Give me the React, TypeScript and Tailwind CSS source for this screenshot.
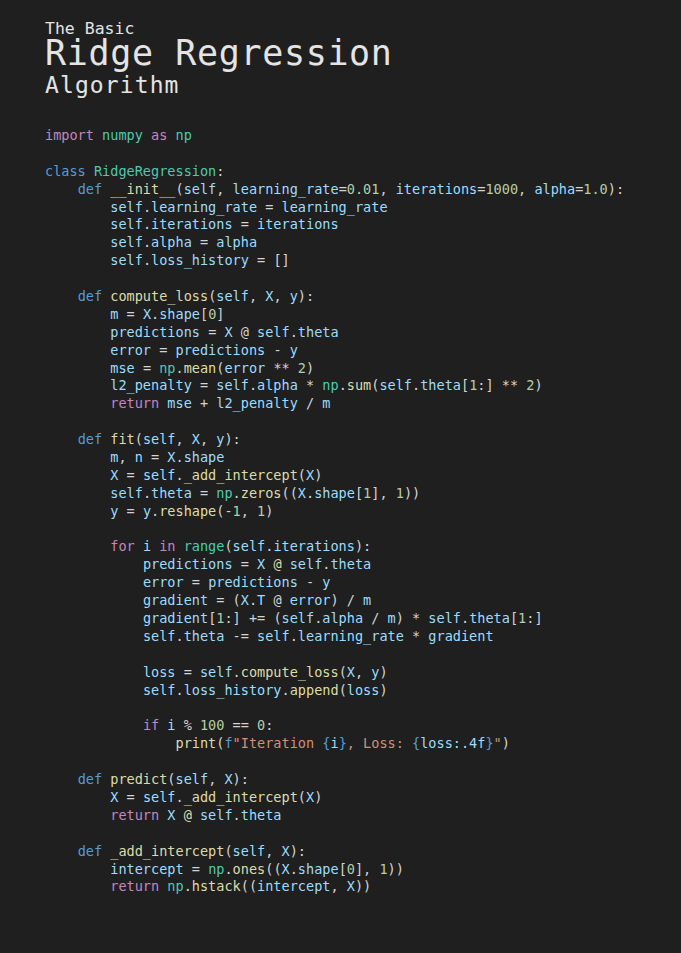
import React from "react";

// source lines; "@@" marks an @ that the editor coloured yellow
const code = [
  "import numpy as np",
  "",
  "class RidgeRegression:",
  "    def __init__(self, learning_rate=0.01, iterations=1000, alpha=1.0):",
  "        self.learning_rate = learning_rate",
  "        self.iterations = iterations",
  "        self.alpha = alpha",
  "        self.loss_history = []",
  "",
  "    def compute_loss(self, X, y):",
  "        m = X.shape[0]",
  "        predictions = X @ self.theta",
  "        error = predictions - y",
  "        mse = np.mean(error ** 2)",
  "        l2_penalty = self.alpha * np.sum(self.theta[1:] ** 2)",
  "        return mse + l2_penalty / m",
  "",
  "    def fit(self, X, y):",
  "        m, n = X.shape",
  "        X = self._add_intercept(X)",
  "        self.theta = np.zeros((X.shape[1], 1))",
  "        y = y.reshape(-1, 1)",
  "",
  "        for i in range(self.iterations):",
  "            predictions = X @@ self.theta",
  "            error = predictions - y",
  "            gradient = (X.T @ error) / m",
  "            gradient[1:] += (self.alpha / m) * self.theta[1:]",
  "            self.theta -= self.learning_rate * gradient",
  "",
  "            loss = self.compute_loss(X, y)",
  "            self.loss_history.append(loss)",
  "",
  "            if i % 100 == 0:",
  "PRINT",
  "",
  "    def predict(self, X):",
  "        X = self._add_intercept(X)",
  "        return X @@ self.theta",
  "",
  "    def _add_intercept(self, X):",
  "        intercept = np.ones((X.shape[0], 1))",
  "        return np.hstack((intercept, X))",
];

const KEYWORDS = new Set(["import", "as", "return", "for", "in", "if"]);
const STORAGE = new Set(["def", "class"]);
const TYPES = new Set(["numpy", "np", "RidgeRegression", "range"]);

function tokenize(line: string) {
  const out: { t: string; c: string }[] = [];
  const re = /(\s+)|(@@)|([A-Za-z_]\w*)|(\d+(?:\.\d+)?)|(.)/g;
  let m: RegExpExecArray | null;
  while ((m = re.exec(line))) {
    const [tok, ws, at, id, num] = m;
    if (ws) out.push({ t: tok, c: "text-[#d4d4d4]" });
    else if (at) out.push({ t: "@", c: "text-[#dcdcaa]" });
    else if (id) {
      const rest = line.slice(re.lastIndex);
      let c = "text-[#9cdcfe]";
      if (KEYWORDS.has(id)) c = "text-[#c586c0]";
      else if (STORAGE.has(id)) c = "text-[#569cd6]";
      else if (TYPES.has(id)) c = "text-[#4ec9b0]";
      else if (rest.startsWith("(")) c = "text-[#dcdcaa]";
      out.push({ t: tok, c });
    } else if (num) out.push({ t: tok, c: "text-[#b5cea8]" });
    else out.push({ t: tok, c: "text-[#d4d4d4]" });
  }
  return out;
}

function PrintLine() {
  return (
    <>
      <span className="text-[#d4d4d4]">{"                "}</span>
      <span className="text-[#dcdcaa]">print</span>
      <span className="text-[#d4d4d4]">(</span>
      <span className="text-[#569cd6]">f</span>
      <span className="text-[#ce9178]">"Iteration </span>
      <span className="text-[#569cd6]">{"{"}</span>
      <span className="text-[#9cdcfe]">i</span>
      <span className="text-[#569cd6]">{"}"}</span>
      <span className="text-[#ce9178]">, Loss: </span>
      <span className="text-[#569cd6]">{"{"}</span>
      <span className="text-[#9cdcfe]">loss:.4f</span>
      <span className="text-[#569cd6]">{"}"}</span>
      <span className="text-[#ce9178]">"</span>
      <span className="text-[#d4d4d4]">)</span>
    </>
  );
}

export default function App() {
  return (
    <div className="min-h-screen w-full bg-[#1f1f1f] pl-[45px] pt-[20px] pb-10">
      {/* Title */}
      <div className="font-['DejaVu_Sans_Mono',monospace] text-[#e4e4e4]">
        <div className="text-[16.5px] leading-[18px]">The Basic</div>
        <div className="text-[35px] leading-[30px] tracking-[0.65px]">Ridge Regression</div>
        <div className="text-[23px] leading-[34px] tracking-[1.1px]">Algorithm</div>
      </div>

      {/* Code */}
      <pre className="mt-[25px] font-['DejaVu_Sans_Mono',monospace] text-[13.55px] leading-[17.9px] text-[#d4d4d4]">
        {code.map((line, i) => (
          <div key={i} className="h-[17.9px] whitespace-pre">
            {line === "PRINT" ? (
              <PrintLine />
            ) : (
              tokenize(line).map((tk, j) => (
                <span key={j} className={tk.c}>
                  {tk.t}
                </span>
              ))
            )}
          </div>
        ))}
      </pre>
    </div>
  );
}
